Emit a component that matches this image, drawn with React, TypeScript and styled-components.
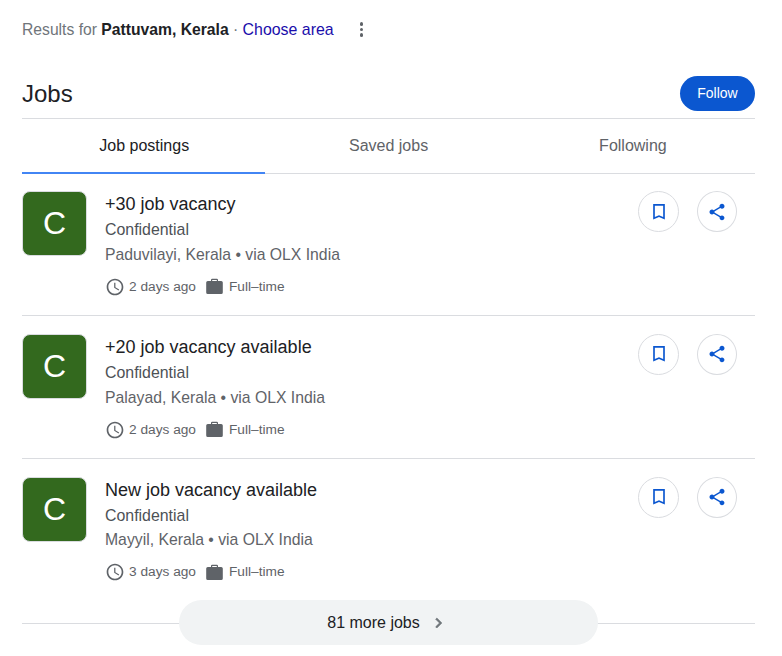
import { createGlobalStyle, styled } from "styled-components";

const GlobalStyle = createGlobalStyle`
  html, body {
    margin: 0;
    padding: 0;
    background: #fff;
    font-family: "Liberation Sans", Arial, sans-serif;
  }
`;

const jobs = [
  { title: "+30 job vacancy", place: "Paduvilayi, Kerala • via OLX India", age: "2 days ago" },
  { title: "+20 job vacancy available", place: "Palayad, Kerala • via OLX India", age: "2 days ago" },
  { title: "New job vacancy available", place: "Mayyil, Kerala • via OLX India", age: "3 days ago" },
];

const ClockIcon = () => (
  <svg width="20" height="20" viewBox="0 0 24 24" fill="#5f6368">
    <path d="M11.99 2C6.47 2 2 6.48 2 12s4.47 10 9.99 10C17.52 22 22 17.52 22 12S17.52 2 11.99 2zM12 20c-4.42 0-8-3.58-8-8s3.58-8 8-8 8 3.58 8 8-3.58 8-8 8z" />
    <path d="M12.5 7H11v6l5.25 3.15.75-1.23-4.5-2.67z" />
  </svg>
);

const BagIcon = () => (
  <BagSvg width="17" height="17" viewBox="0 0 17 17" fill="#5f6368">
    <path
      fillRule="evenodd"
      d="M5 3V2a1.2 1.2 0 0 1 1.2-1.2h4.6A1.2 1.2 0 0 1 12 2v1h3.2a1.6 1.6 0 0 1 1.6 1.6v9.8a1.6 1.6 0 0 1-1.6 1.6H1.8a1.6 1.6 0 0 1-1.6-1.6V4.6A1.6 1.6 0 0 1 1.8 3zM6.2 3h4.6V2H6.2z"
    />
  </BagSvg>
);

const BookmarkIcon = () => (
  <svg width="20" height="20" viewBox="0 0 24 24" fill="#0b57d0">
    <path fillRule="evenodd" d="M5 2.5h14v18.5l-7-3-7 3zM7 4.5v13.4l5-2.1 5 2.1V4.5z" />
  </svg>
);

const ShareIcon = () => (
  <svg width="20" height="20" viewBox="0 0 24 24" fill="#0b57d0">
    <path d="M18 16.08c-.76 0-1.44.3-1.96.77L8.91 12.7c.05-.23.09-.46.09-.7s-.04-.47-.09-.7l7.05-4.11c.54.5 1.25.81 2.04.81 1.66 0 3-1.34 3-3s-1.34-3-3-3-3 1.34-3 3c0 .24.04.47.09.7L8.04 9.81C7.5 9.31 6.79 9 6 9c-1.66 0-3 1.34-3 3s1.34 3 3 3c.79 0 1.5-.31 2.04-.81l7.12 4.16c-.05.21-.08.43-.08.65 0 1.61 1.31 2.92 2.92 2.92s2.92-1.31 2.92-2.92-1.31-2.92-2.92-2.92z" />
  </svg>
);

export default function App() {
  return (
    <>
      <GlobalStyle />
      <Page>
        <LocationBar>
          <LocationText>
            Results for <strong>Pattuvam, Kerala</strong> · <AreaLink>Choose area</AreaLink>
          </LocationText>
          <MoreDots>
            <i />
            <i />
            <i />
          </MoreDots>
        </LocationBar>

        <TitleRow>
          <Title>Jobs</Title>
          <FollowButton>Follow</FollowButton>
        </TitleRow>

        <Tabs>
          <Tab $active>Job postings</Tab>
          <Tab>Saved jobs</Tab>
          <Tab>Following</Tab>
        </Tabs>

        {jobs.map((job) => (
          <JobRow key={job.title}>
            <Logo>C</Logo>
            <JobInfo>
              <JobTitle>{job.title}</JobTitle>
              <Company>Confidential</Company>
              <Place>{job.place}</Place>
              <Meta>
                <MetaItem>
                  <ClockIcon />
                  {job.age}
                </MetaItem>
                <MetaItem>
                  <BagIcon />
                  Full–time
                </MetaItem>
              </Meta>
            </JobInfo>
            <Actions>
              <RoundButton>
                <BookmarkIcon />
              </RoundButton>
              <RoundButton>
                <ShareIcon />
              </RoundButton>
            </Actions>
          </JobRow>
        ))}

        <MoreRow>
          <MoreButton>
            81 more jobs
            <svg width="20" height="20" viewBox="0 0 24 24" fill="#70757a" stroke="#70757a" strokeWidth="0.8">
              <path d="M9.4 18 8 16.6l4.6-4.6L8 7.4 9.4 6l6 6z" />
            </svg>
          </MoreButton>
        </MoreRow>
      </Page>
    </>
  );
}

const Page = styled.div`
  width: 733px;
  height: 656px;
  margin-left: 22px;
  overflow: hidden;
`;

const LocationBar = styled.div`
  display: flex;
  align-items: center;
  height: 59px;
`;

const LocationText = styled.div`
  font-size: 15.7px;
  color: #70757a;
  white-space: nowrap;

  strong {
    color: #202124;
    font-weight: 700;
  }
`;

const AreaLink = styled.a`
  font-size: 15.9px;
  color: #1a0dab;
`;

const MoreDots = styled.div`
  display: flex;
  flex-direction: column;
  gap: 2px;
  margin-left: 26px;

  i {
    display: block;
    width: 3.5px;
    height: 3.5px;
    border-radius: 50%;
    background: #5f6368;
  }
`;

const TitleRow = styled.div`
  display: flex;
  align-items: center;
  justify-content: space-between;
  height: 60px;
  padding: 17px 0 7px;
  box-sizing: border-box;
  border-bottom: 1px solid #dadce0;
`;

const Title = styled.h2`
  margin: 0;
  font-size: 24px;
  font-weight: 400;
  color: #202124;
`;

const FollowButton = styled.button`
  width: 75px;
  height: 35px;
  border: 0;
  border-radius: 18px;
  padding: 0 0 2px;
  background: #0b57d0;
  color: #fff;
  font: 14px "Liberation Sans", Arial, sans-serif;
`;

const Tabs = styled.div`
  display: grid;
  grid-template-columns: repeat(3, 1fr);
  height: 54.6px;
  box-sizing: border-box;
  border-bottom: 1px solid #dadce0;
`;

const Tab = styled.div<{ $active?: boolean }>`
  display: flex;
  align-items: center;
  justify-content: center;
  width: 243px;
  height: 54.6px;
  box-sizing: border-box;
  padding: 1px 0 0 1.5px;
  font-size: 16px;
  color: ${(p) => (p.$active ? "#202124" : "#5f6368")};
  border-bottom: 2px solid ${(p) => (p.$active ? "#4285f4" : "transparent")};
`;

const JobRow = styled.div`
  display: flex;
  align-items: flex-start;
  height: 142.7px;
  box-sizing: border-box;
  padding-top: 17.6px;
  border-bottom: 1px solid #dadce0;

  &:nth-last-child(2) {
    border-bottom: 0;
  }
`;

const Logo = styled.div`
  flex: none;
  width: 65px;
  height: 65px;
  box-sizing: border-box;
  display: flex;
  align-items: center;
  justify-content: center;
  border: 1px solid #dadce0;
  border-radius: 8px;
  background: #33691e;
  color: #fff;
  font-size: 32px;
`;

const JobInfo = styled.div`
  flex: 1;
  margin-left: 18px;
  padding-top: 1px;
`;

const JobTitle = styled.div`
  font-size: 18px;
  line-height: 24px;
  color: #202124;
`;

const Company = styled.div`
  margin-top: 3px;
  font-size: 15.9px;
  line-height: 22px;
  color: #4d5156;
`;

const Place = styled.div`
  margin-top: 2.7px;
  font-size: 15.75px;
  line-height: 22px;
  color: #5f6368;
`;

const Meta = styled.div`
  display: flex;
  align-items: center;
  gap: 10px;
  margin-top: 11px;
`;

const MetaItem = styled.div`
  display: flex;
  align-items: center;
  gap: 4px;
  font-size: 13.7px;
  line-height: 20px;
  color: #5f6368;
`;

const BagSvg = styled.svg`
  margin-right: 2px;
`;

const Actions = styled.div`
  display: flex;
  gap: 18px;
  margin-right: 18px;
`;

const RoundButton = styled.button`
  display: flex;
  align-items: center;
  justify-content: center;
  width: 41px;
  height: 41px;
  padding: 0;
  border: 1px solid #dadce0;
  border-radius: 50%;
  background: #fff;

  & + & {
    width: 40px;
  }
`;

const MoreRow = styled.div`
  position: relative;
  display: flex;
  justify-content: center;
  margin-top: -1.7px;

  &::before {
    content: "";
    position: absolute;
    left: 0;
    right: 0;
    top: 23px;
    height: 1px;
    background: #dadce0;
  }
`;

const MoreButton = styled.button`
  position: relative;
  display: flex;
  align-items: center;
  justify-content: center;
  gap: 9px;
  width: 419px;
  height: 45px;
  padding: 1px 1px 0 0;
  border: 0;
  border-radius: 23px;
  background: #f1f3f4;
  color: #202124;
  font: 16px "Liberation Sans", Arial, sans-serif;
`;
